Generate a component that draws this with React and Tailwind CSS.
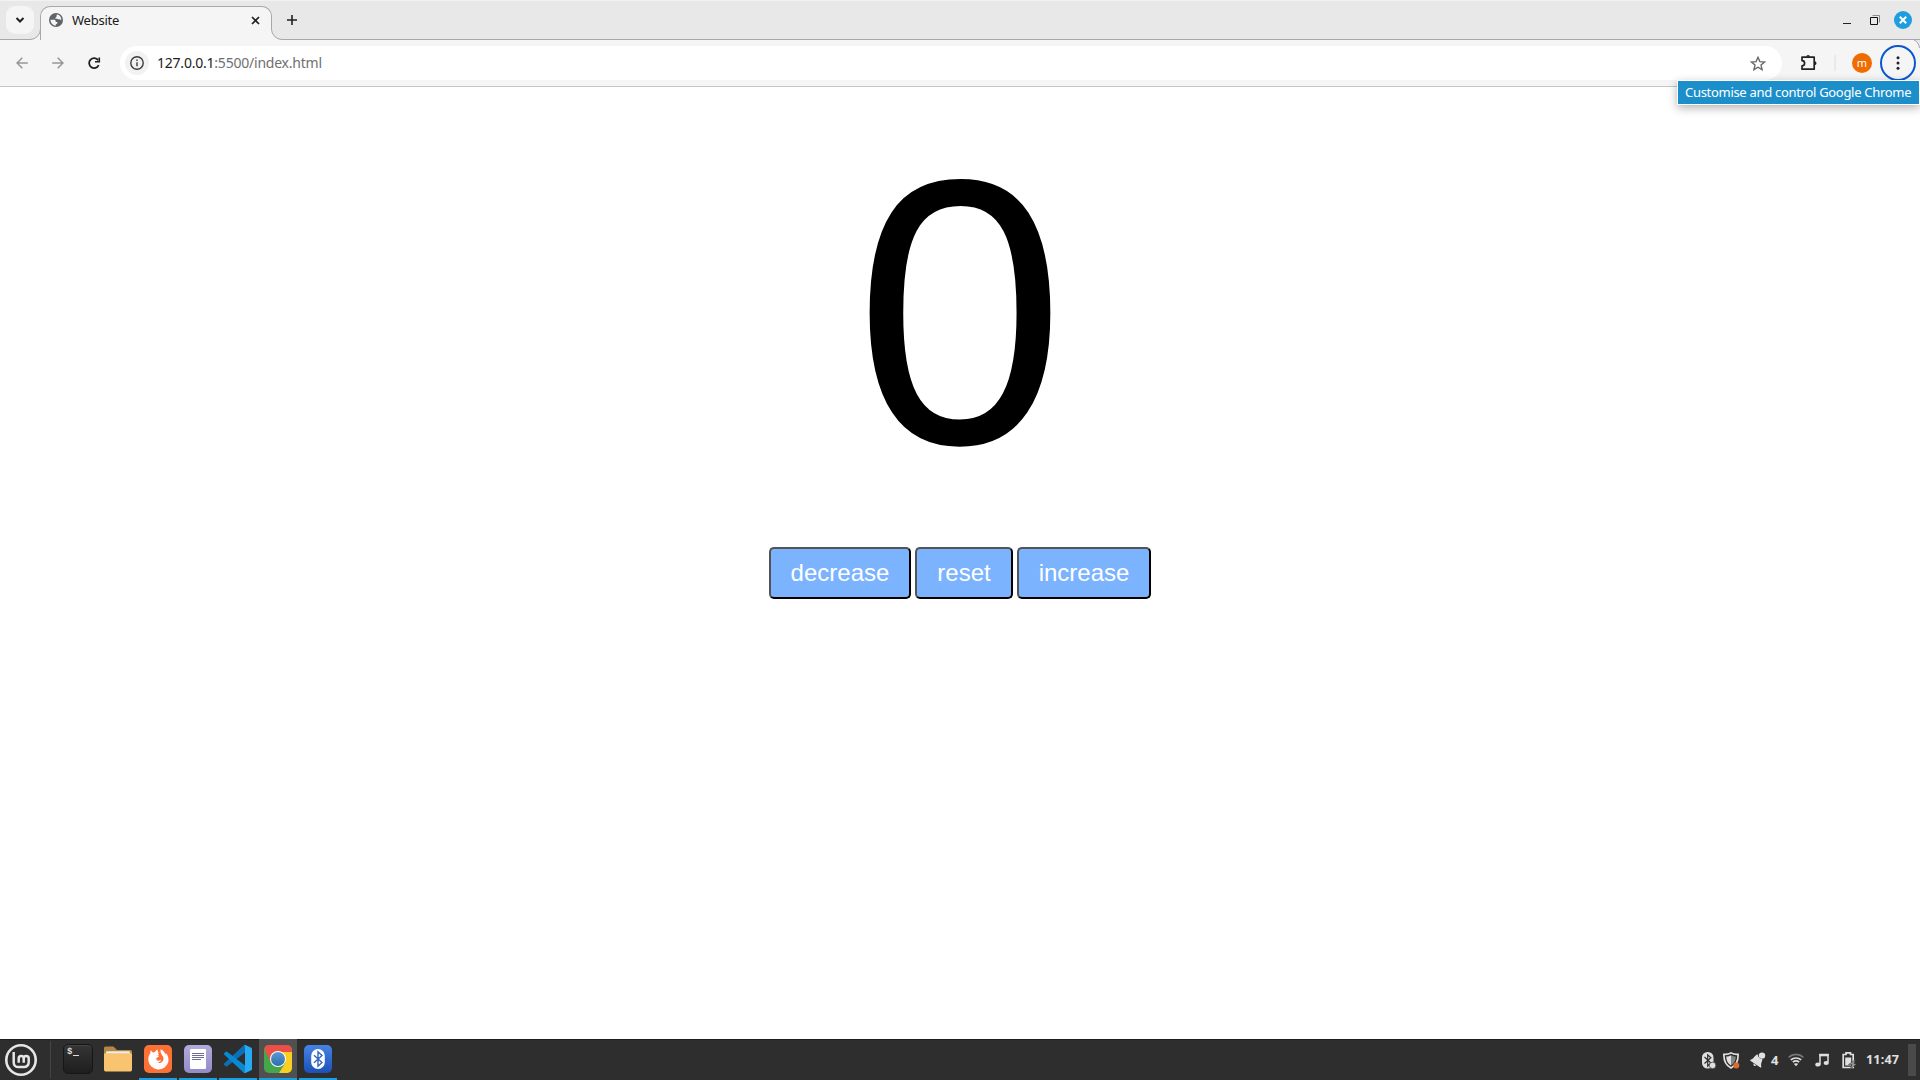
import React from 'react';

function TabCurve({ flip }) {
  return (
    <svg width="12" height="12" viewBox="0 0 12 12" className={flip ? '-scale-x-100' : ''}>
      <path d="M0 11.5H1A10.5 10.5 0 0 0 11.5 1V0H12V12H0Z" fill="#f5f5f5" />
      <path d="M0 11.5H1A10.5 10.5 0 0 0 11.5 1V0" fill="none" stroke="#a8a8a8" />
    </svg>
  );
}

function Globe() {
  return (
    <svg width="14" height="14" viewBox="0 0 14 14">
      <circle cx="7" cy="7" r="7" fill="#5f6368" />
      <path d="M8.2 1.5c1.6.3 3 1.400 3.700 2.900.4.900.5 2.100.3 3.100-.5-.9-1.400-1.300-2.400-1.200-1 .1-1.300-.6-2.200-.6-.8 0-1.300.5-1.300-.4 0-.8 1.100-.8 1.200-1.600.1-.7-.4-1.100.7-2.200Z" fill="#f5f5f5" />
      <path d="M1.500 6.800h3.600c1.100 0 1.500.7 1.500 1.500 0 .6.500.7 1.300.7.700 0 .8.900.3 1.400-.7.600-1.500.6-1.500 1.400v.9C3.800 12.500 1.500 10 1.500 6.800Z" fill="#f5f5f5" />
    </svg>
  );
}

function TabStrip() {
  return (
    <div className="flex h-10 shrink-0 bg-[#e8e8e8] shadow-[inset_0_1px_0_#f2f2f2,inset_0_-1px_0_#a8a8a8]">
      <div className="mt-1.5 ml-1.5 flex h-7 w-7 shrink-0 items-center justify-center rounded-[9px] bg-[#f5f5f5]">
        <svg width="10" height="8" viewBox="0 0 10 8"><path d="M1.500 2 5 5.500 8.500 2" fill="none" stroke="#202020" strokeWidth="2" /></svg>
      </div>
      <div className="-ml-[5px] flex items-end"><TabCurve /></div>
      <div className="-ml-px mt-1.5 flex h-[34px] w-[232px] rounded-t-[10px] border border-b-0 border-[#a8a8a8] bg-[#f5f5f5] pl-2 pr-[11px]">
        <div className="flex h-[26px] w-full items-center">
          <Globe />
          <span className="ml-[9px] flex-1 text-[13px] leading-none tracking-[-0.25px] text-[#202020] [font-family:'Noto_Sans',sans-serif]">Website</span>
          <svg width="9" height="9" viewBox="0 0 9 9"><path d="m1 1 7 7M8 1 1 8" stroke="#202020" strokeWidth="1.700" /></svg>
        </div>
      </div>
      <div className="-ml-px flex items-end"><TabCurve flip /></div>
      <div className="mt-[15px] ml-[4px] h-[10px]">
        <svg width="10" height="10" viewBox="0 0 10 10"><path d="M5 0v10M0 5h10" stroke="#202020" strokeWidth="1.600" /></svg>
      </div>
      <div className="ml-auto flex h-10 items-center pr-2">
        <svg className="mr-[19px]" width="8" height="11" viewBox="0 0 8 11"><path d="M0 8.500h8" stroke="#222" /></svg>
        <svg className="mr-[14px]" width="10" height="10" viewBox="0 0 10 10">
          <path d="M2.500.5h7v7" fill="none" stroke="#8b8b8b" /><path d="M.5 2.500h7v7h-7Z" fill="none" stroke="#111" />
        </svg>
        <svg width="18" height="18" viewBox="0 0 18 18"><circle cx="9" cy="9" r="9" fill="#1f9ede" /><path d="m5.800 5.800 6.400 6.400M12.200 5.800 5.800 12.200" stroke="#fff" strokeWidth="2" /></svg>
      </div>
    </div>
  );
}

function Toolbar() {
  return (
    <div className="flex h-[47px] shrink-0 items-center border-b border-[#c4c4c4] bg-[#f5f5f5]">
      <svg className="ml-4" width="12" height="12" viewBox="0 0 12 12"><path d="M11.800 6H1M6.300.7 1 6l5.300 5.300" fill="none" stroke="#969696" strokeWidth="1.500" /></svg>
      <svg className="ml-6" width="12" height="12" viewBox="0 0 12 12"><path d="M.2 6H11M5.700.7 11 6l-5.300 5.300" fill="none" stroke="#969696" strokeWidth="1.500" /></svg>
      <svg className="ml-6" width="13" height="13" viewBox="0 0 13 13"><path d="M10.700 8.200A5 5 0 1 1 10.200 3.100" fill="none" stroke="#202020" strokeWidth="1.800" /><path d="M12.100.5v5.100H7V4h3.500V.5Z" fill="#202020" /></svg>
      <div className="ml-[19px] flex h-[34px] w-[1662px] shrink-0 items-center rounded-full bg-white pl-[5px] pr-4">
        <div className="flex h-6 w-6 items-center justify-center rounded-full bg-[#f2f2f2]">
          <svg width="14" height="14" viewBox="0 0 14 14"><circle cx="7" cy="7" r="6.200" fill="none" stroke="#3c3c3c" strokeWidth="1.400" /><path d="M7 6.200v4.100M7 3.500v1.500" stroke="#3c3c3c" strokeWidth="1.400" /></svg>
        </div>
        <span className="ml-2 flex-1 text-[14px] leading-none tracking-[-0.22px] text-[#707070] [font-family:'Noto_Sans',sans-serif]"><span className="text-[#222]">127.0.0.1</span>:5500/index.html</span>
        <svg width="16" height="15" viewBox="0 0 16 15"><path d="m8 1.300 1.900 4.300 4.700.4-3.600 3.100 1.100 4.600L8 11.200l-4.100 2.500L5 9.100 1.400 6l4.700-.4Z" fill="none" stroke="#666" strokeWidth="1.350" /></svg>
      </div>
      <svg className="ml-[18px] shrink-0" width="17" height="18" viewBox="0 0 17 18">
        <path d="M2 3.200H14.200V15.200H2V11.800A2.600 2.600 0 0 0 2 6.600Z" fill="none" stroke="#222" strokeWidth="1.700" strokeLinejoin="round" />
        <path d="M6.300 2.800a1.800 1.800 0 0 1 3.600 0ZM14.600 7.300a1.900 1.900 0 0 1 0 3.800Z" fill="#222" />
      </svg>
      <div className="ml-[17px] h-4 w-[2px] bg-[#e9e9e9]" />
      <div className="ml-4 flex h-5 w-5 items-center justify-center rounded-full bg-[#ef6c00] pb-px text-[11px] leading-none text-white [font-family:'Noto_Sans',sans-serif]">m</div>
      <div className="ml-2 flex h-9 w-9 shrink-0 items-center justify-center rounded-full border-2 border-[#0b57d0]">
        <svg width="4" height="14" viewBox="0 0 4 14"><circle cx="2" cy="1.700" r="1.500" fill="#222" /><circle cx="2" cy="7" r="1.500" fill="#222" /><circle cx="2" cy="12.300" r="1.500" fill="#222" /></svg>
      </div>
      <svg className="-ml-0.5 shrink-0 self-start" width="6" height="10" viewBox="0 0 6 10"><path d="M0 0h6v9Q5 2 0 0Z" fill="#e8e8e8" /><path d="M0 0Q4.500 1.500 5.500 8" fill="none" stroke="#a8a8a8" /></svg>
    </div>
  );
}

function CounterButton({ children }) {
  return (
    <button className="h-[52px] rounded-[5px] border-2 border-black bg-[#7bb3ff] px-5 pb-px text-[24px] leading-[27px] text-white [border-style:outset] [font-family:'Liberation_Sans',Arial,sans-serif]">
      {children}
    </button>
  );
}

function MintLogo() {
  return (
    <svg width="32" height="32" viewBox="0 0 32 32" fill="none" stroke="#e6e6e6">
      <circle cx="16" cy="16" r="14.700" strokeWidth="2.600" />
      <path d="M8.700 8v10.500a4.600 4.600 0 0 0 4.600 4.600h5.800a4.600 4.600 0 0 0 4.600-4.600v-4a2.500 2.500 0 0 0-5 0v4.200M18.700 18.700v-4.200a2.500 2.500 0 0 0-5 0v4.200" strokeWidth="2.500" />
    </svg>
  );
}

function TerminalIcon() {
  return (
    <div className="flex h-[30px] w-[30px] rounded-[5px] border border-[#161616] bg-linear-to-b from-[#353535] to-[#1e1e1e] pl-[3px] pt-[3px] shadow-[inset_0_1px_0_#444]">
      <span className="text-[9px] font-bold leading-none text-[#ddd] [font-family:'Liberation_Mono',monospace]">$</span>
      <div className="ml-px mt-[7px] h-px w-[6px] bg-[#ddd]" />
    </div>
  );
}

function FolderIcon() {
  return (
    <svg width="28" height="26" viewBox="0 0 28 26">
      <path d="M0 2a1.500 1.500 0 0 1 1.500-1.500h8L13 4h13.500A1.500 1.500 0 0 1 28 5.500V12H0Z" fill="#b38846" />
      <path d="M2 6.500A1.300 1.300 0 0 1 3.300 5.200h21.400A1.300 1.300 0 0 1 26 6.500V10H2Z" fill="#eee" />
      <path d="M0 8.500A1.300 1.300 0 0 1 1.300 7.300h25.400A1.300 1.300 0 0 1 28 8.500v15.300a1.600 1.600 0 0 1-1.600 1.600H1.600A1.600 1.600 0 0 1 0 23.800Z" fill="#f9c470" />
    </svg>
  );
}

function FirefoxIcon() {
  return (
    <svg width="28" height="28" viewBox="0 0 28 28">
      <rect width="28" height="28" rx="5" fill="#fd7137" />
      <path d="M6.600 5.200 9 7.400 11 7c.6-1.200 1.300-1.900 2.700-2.500-.2 1.100 0 2.100.7 2.800l2.200.4-.1-3.500c2.900 1.300 4.100 3.100 4.900 5l.7-1c2.200 2.600 2.900 6 2.100 9.100A10.200 10.200 0 0 1 4.400 16C3.900 12.500 5 10.100 6.200 8.500Z" fill="#fff" />
      <path d="M10.200 10.800c1.500-.5 3.200-.3 4.300-.2l.2 1.100-2.300 1.400c-.5 1 .1 2.400 1.600 2.600 1.300.1 1.900-.7 3.200-.4-.9 1.500-2.300 2.200-4 2 2.500 1.500 5.700.1 6.200-2.500.4-1.800-.1-3.500-1.400-4.600l-1.500-3-2.700.2 1 2.500Z" fill="#fd7137" />
    </svg>
  );
}

function EditorIcon() {
  return (
    <svg width="28" height="28" viewBox="0 0 28 28">
      <defs><linearGradient id="editor" x2="0" y2="1"><stop stopColor="#b2abdc" /><stop offset="1" stopColor="#928bc9" /></linearGradient></defs>
      <rect width="28" height="28" rx="5" fill="url(#editor)" />
      <rect x="6" y="4" width="16" height="20" rx="1" fill="#fff" />
      <path d="M8 8.500h12M8 10.500h12M8 12.500h12M8 14.500h9" stroke="#706b91" />
    </svg>
  );
}

function CodeIcon() {
  return (
    <svg width="28" height="28" viewBox="0 0 28 28">
      <path d="M21 0 28 3v22l-7 3V7.500L3.200 21.300a1.200 1.200 0 0 1-1.500 0L.4 20a1.100 1.100 0 0 1 0-1.700L19.500.6Q20.200 0 21 0Z" fill="#0b70b5" />
      <path d="M21 28 19.500 27.400.4 9.700A1.100 1.100 0 0 1 .4 8l1.300-1.300a1.200 1.200 0 0 1 1.500 0L21 20.500Z" fill="#078ad2" />
      <path d="M20.500.3 21.300 0 27 2.700q1 .5 1 1.600v19.400q0 1.100-1 1.600L21.300 28l-1.800-.6q1.500.3 1.500-1.600V2.200Q21 .3 19.500.6Z" fill="#28aaf2" />
    </svg>
  );
}

function ChromeIcon() {
  return (
    <svg width="28" height="28" viewBox="0 0 28 28">
      <defs>
        <clipPath id="tile"><rect width="28" height="28" rx="5" /></clipPath>
        <linearGradient id="lens" x2="0" y2="1"><stop stopColor="#5b9ad3" /><stop offset="1" stopColor="#2d6ead" /></linearGradient>
      </defs>
      <g clipPath="url(#tile)">
        <rect width="28" height="28" fill="#45a64c" />
        <path d="M14 6.500H28V28H15l6.300-10Z" fill="#fbce22" />
        <path d="M0 3V0h28v7H14L6.800 17.500Z" fill="#ec4f45" />
      </g>
      <circle cx="14" cy="14" r="8" fill="#fff" /><circle cx="14" cy="14" r="7" fill="url(#lens)" />
    </svg>
  );
}

function BluetoothIcon() {
  return (
    <svg width="28" height="28" viewBox="0 0 28 28">
      <defs><linearGradient id="blue" x2="0" y2="1"><stop stopColor="#4783e6" /><stop offset="1" stopColor="#1c51b7" /></linearGradient></defs>
      <rect width="28" height="28" rx="5" fill="url(#blue)" />
      <rect x="7.200" y="4" width="13.600" height="20" rx="6.800" fill="#fff" />
      <path d="m10 10.300 8 7.200-4 3.700V6.800l4 3.700-8 7.200" fill="none" stroke="#2f66bb" strokeWidth="1.400" />
    </svg>
  );
}

const apps = [
  { name: 'terminal', Icon: TerminalIcon },
  { name: 'files', Icon: FolderIcon },
  { name: 'firefox', Icon: FirefoxIcon, running: true },
  { name: 'editor', Icon: EditorIcon, running: true },
  { name: 'code', Icon: CodeIcon, running: true },
  { name: 'chrome', Icon: ChromeIcon, running: true, active: true },
  { name: 'bluetooth', Icon: BluetoothIcon, running: true },
];

function Tray() {
  return (
    <div className="ml-auto flex h-[41px] items-center pr-1 pt-px text-[#e0e0e0]">
      <svg width="14" height="17" viewBox="0 0 14 17">
        <rect width="11.500" height="16.500" rx="5.500" fill="#e0e0e0" />
        <path d="m2.500 5 6.400 6-3.200 3V2.800l3.200 3L2.500 11.500" fill="none" stroke="#2e2e2e" strokeWidth="1.200" />
        <circle cx="10.600" cy="13.400" r="3.300" fill="#e0e0e0" stroke="#2e2e2e" strokeWidth=".7" />
      </svg>
      <svg className="ml-[7px]" width="17" height="17" viewBox="0 0 17 17">
        <path d="M8 .9c1.900 1.200 4 1.700 7.100 1.500.2 6.400-1.600 10.700-7.100 13.500C2.500 13.100.7 8.800.9 2.400 4 2.600 6.100 2.100 8 .9Z" fill="none" stroke="#e0e0e0" strokeWidth="1.700" />
        <path d="M8 3.300v10.300c-3.400-2.300-4.700-5-4.800-9C5.100 4.500 6.600 4.200 8 3.300Z" fill="#e0e0e0" />
        <path d="M8 3.300c1.400.9 2.900 1.200 4.800 1.300-.1 4-1.400 6.700-4.800 9Z" fill="#858585" />
        <circle cx="13.300" cy="13.500" r="3" fill="#e2692e" />
      </svg>
      <svg className="ml-[10px]" width="16" height="16" viewBox="0 0 16 16" fill="#e0e0e0">
        <path d="M0 8.600.6 7.700C3.800 7 4.600 3.200 7.600 2.200c.3 3 2.300 4.800 4.700 4.900.2 2.600-2 4.300-.9 7.600l-.7 1Z" />
        <circle cx="12" cy="3.600" r="3.200" />
        <path d="m3.600 11.600 2.700 1.700c-.5.800-1.400 1-2.100.6-.8-.5-1-1.400-.6-2.300Z" />
      </svg>
      <span className="ml-[5px] w-2 text-[13px] font-bold leading-none [font-family:'Noto_Sans',sans-serif]">4</span>
      <svg className="ml-[9px]" width="16" height="14" viewBox="0 0 16 14" fill="none" strokeWidth="1.700">
        <path d="M.6 4.300a11 11 0 0 1 14.800 0" stroke="#777" /><path d="M2.800 6.900a8 8 0 0 1 10.400 0" stroke="#e0e0e0" /><path d="M4.800 9.200a5.200 5.200 0 0 1 6.400 0" stroke="#e0e0e0" /><path d="M8 13.200 5.800 10.800q2.200-1.300 4.400 0Z" fill="#e0e0e0" />
      </svg>
      <svg className="ml-[11px]" width="14" height="14" viewBox="0 0 14 14"><path d="M5 11V1.500h8V9.500" fill="none" stroke="#e0e0e0" strokeWidth="1.500" /><path d="M4.300 1H13.700v2.300H4.300Z" fill="#e0e0e0" /><ellipse cx="3" cy="11.500" rx="2.700" ry="2.100" fill="#e0e0e0" /><ellipse cx="11.200" cy="10" rx="2.600" ry="2.100" fill="#e0e0e0" /></svg>
      <svg className="ml-[13px]" width="15" height="17" viewBox="0 0 15 17"><path d="M4 2.500V.9h4.500v1.600h2.700v13H1.200v-13Z" fill="none" stroke="#e0e0e0" strokeWidth="1.700" /><path d="M3.200 5.500h6v8h-6Z" fill="#e0e0e0" /><path d="m13.500 7.500-7 5h3.300L8.500 17 15 11.700h-3Z" fill="#969696" stroke="#2e2e2e" strokeWidth=".5" /></svg>
      <span className="ml-[9px] w-[35px] whitespace-nowrap text-[12.500px] font-bold leading-none tracking-[0.2px] [font-family:'Noto_Sans',sans-serif]">11:47</span>
      <div className="ml-[7px] h-8 w-2 bg-[#4a4a4a]" />
    </div>
  );
}

export default function App() {
  return (
    <div className="relative flex h-[1080px] w-[1920px] flex-col overflow-hidden bg-white">
      <TabStrip />
      <Toolbar />
      <main className="flex flex-1 flex-col items-center pt-2">
        <div className="h-[442px] text-[378px] leading-[434px] text-black [font-family:'Liberation_Sans',Arial,sans-serif]">0</div>
        <div className="mt-[10px] flex gap-1">
          <CounterButton>decrease</CounterButton>
          <CounterButton>reset</CounterButton>
          <CounterButton>increase</CounterButton>
        </div>
      </main>
      <footer className="flex h-[41px] shrink-0 bg-[#2e2e2e] shadow-[inset_0_1px_0_#1c1c1c]">
        <div className="flex w-[50px] items-center pl-[5px] pt-px"><MintLogo /></div>
        <div className="mt-[2px] h-[37px] w-px bg-[#454545]" />
        <nav className="ml-2 flex gap-[2px]">
          {apps.map(({ name, Icon, running, active }) => (
            <div key={name} className={`flex h-[41px] w-[38px] items-center justify-center border-b-2 pt-px ${running ? 'border-[#1f9ede]' : 'border-transparent'} ${active ? 'bg-[#505050]' : ''}`}>
              <Icon />
            </div>
          ))}
        </nav>
        <Tray />
      </footer>
      <div className="absolute top-[80px] left-[1677px] flex h-[25px] w-[243px] items-center whitespace-nowrap border border-white bg-[#1c8fca] pl-[7px] text-[13px] leading-none tracking-[-0.3px] text-white shadow-[0_3px_10px_rgba(0,0,0,0.3)] [font-family:'Noto_Sans',sans-serif]">
        Customise and control Google Chrome
      </div>
    </div>
  );
}
